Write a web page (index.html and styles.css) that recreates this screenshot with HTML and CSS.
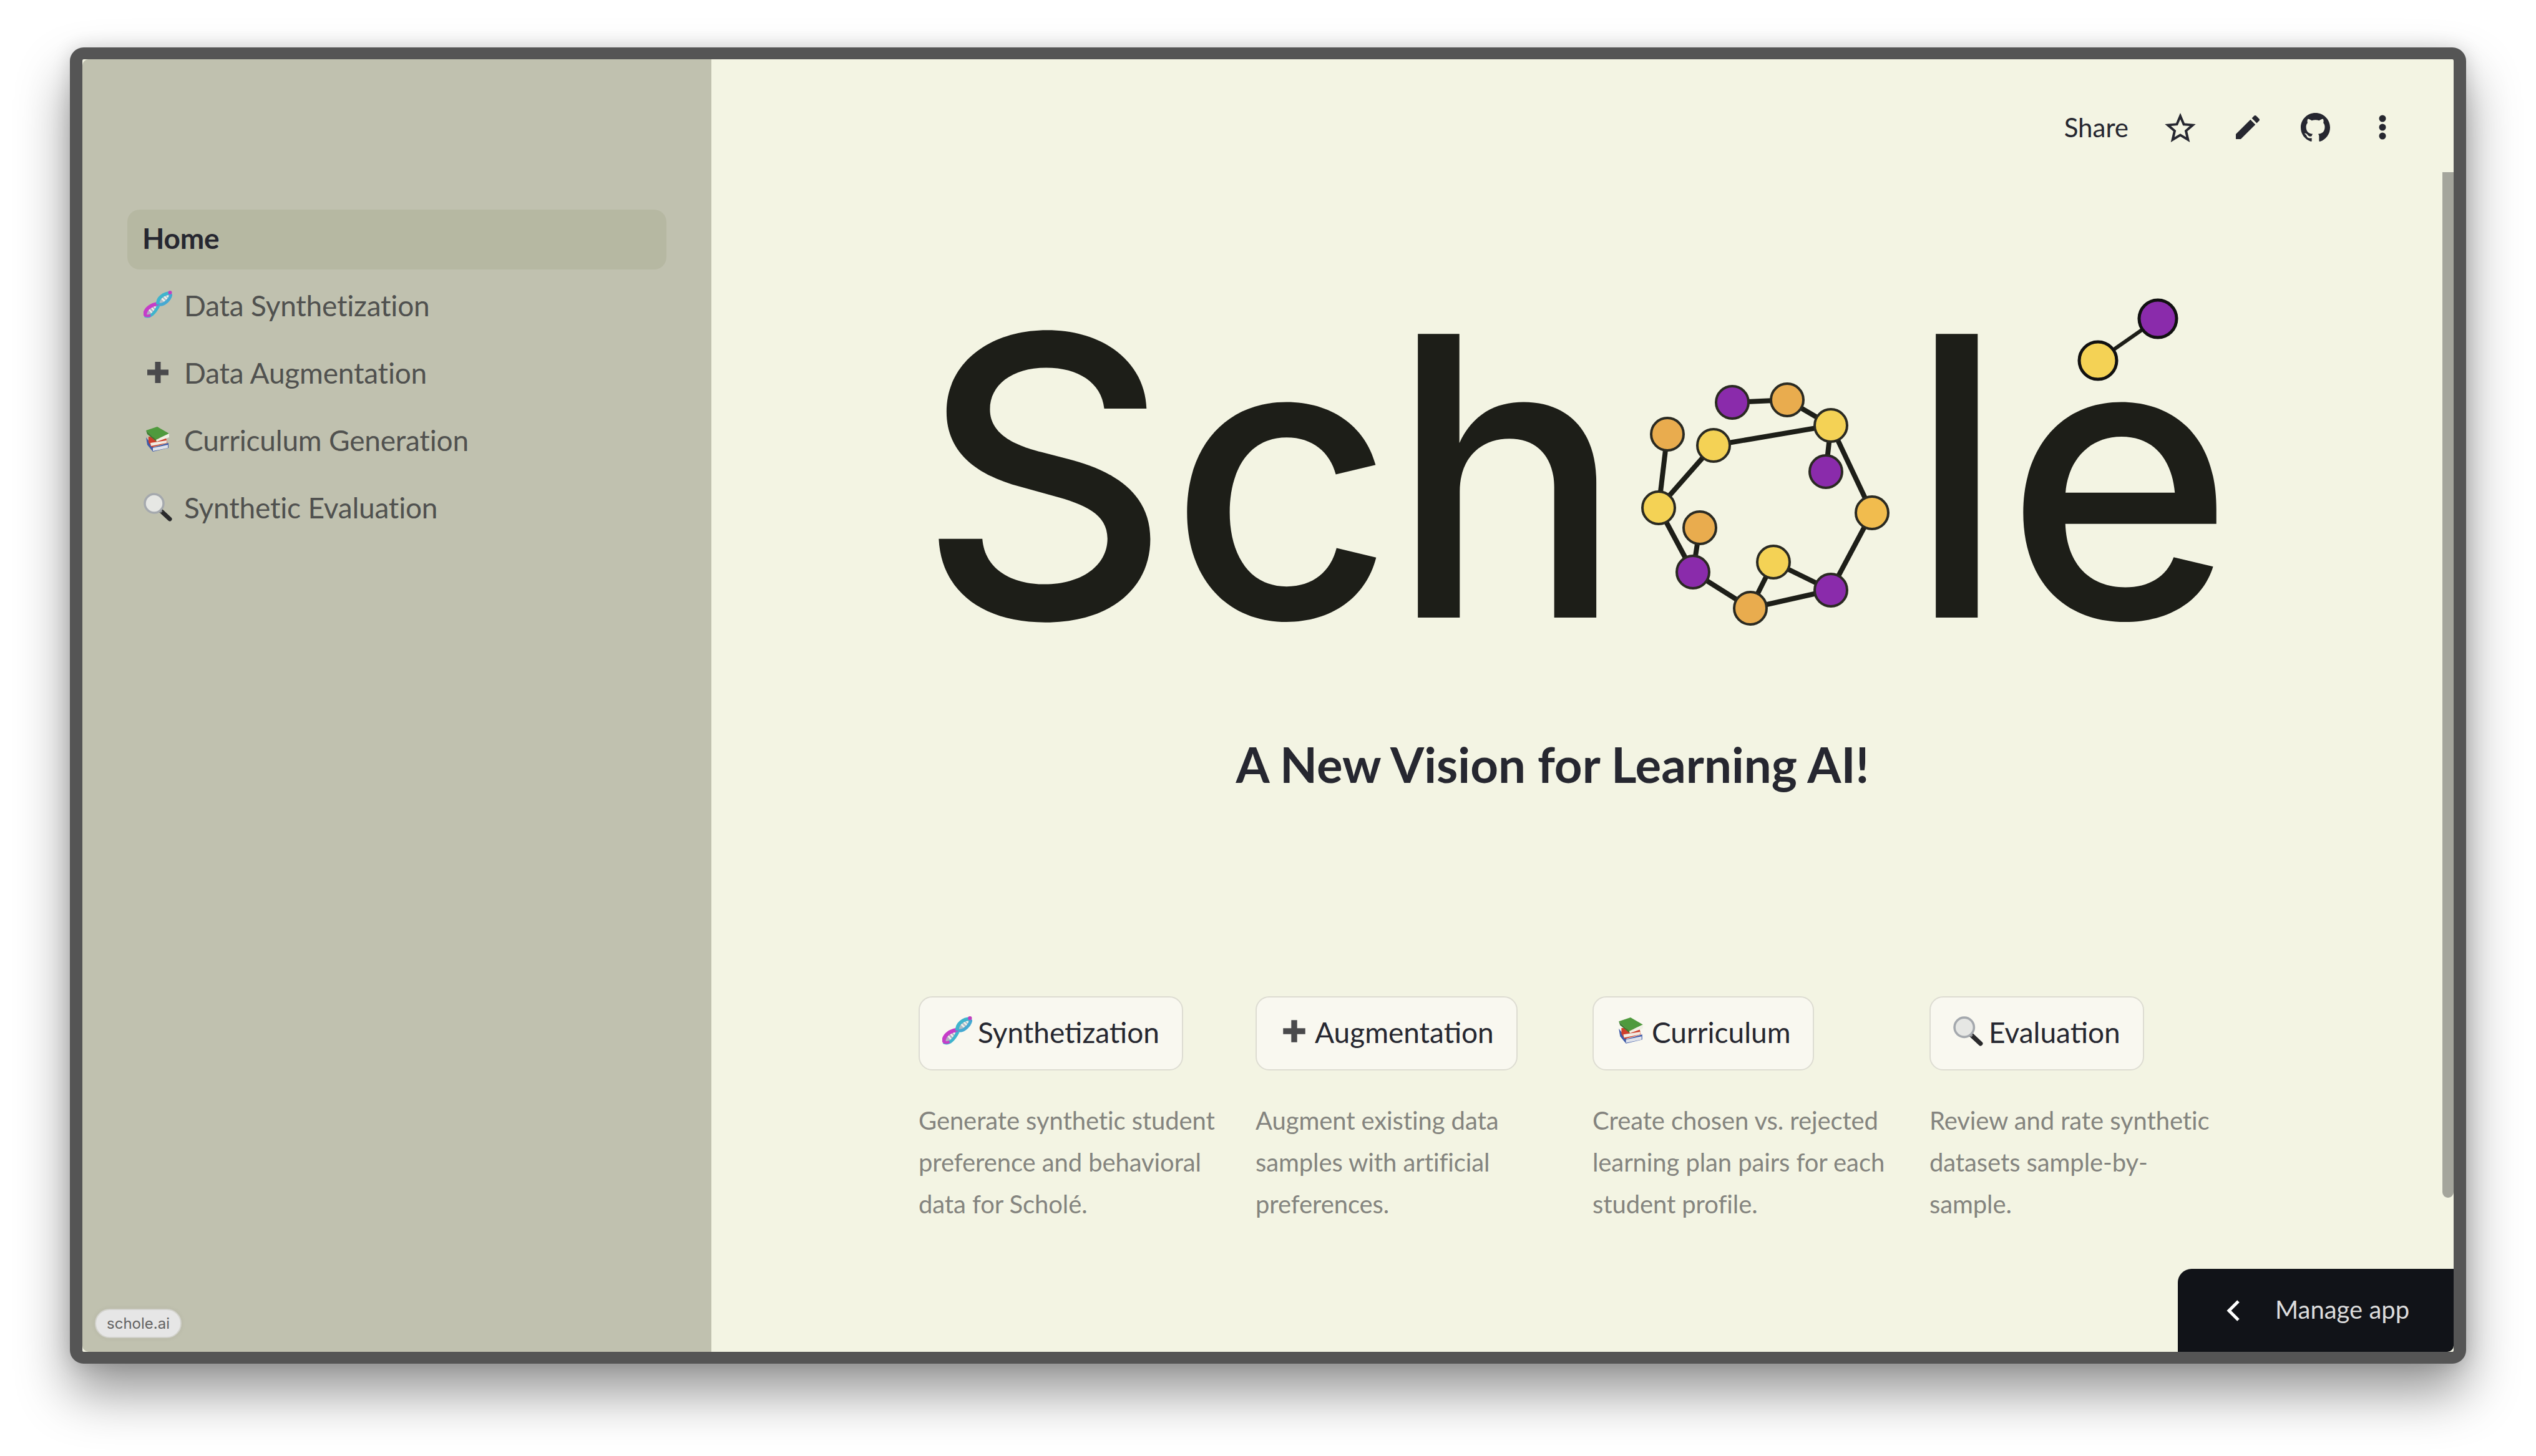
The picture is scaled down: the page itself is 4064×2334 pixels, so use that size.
FILE: index.html
```html
<!DOCTYPE html>
<html lang="en">
<head>
<meta charset="utf-8">
<title>Scholé</title>
<link rel="stylesheet" href="styles.css">
</head>
<body>
<svg class="defs" aria-hidden="true">
  <symbol id="i-dna" viewBox="0 0 46 46">
    <path d="M1 36C3 27 12 22 23 22C22 33 13 42 3 42Z" fill="#b3aec4"/>
    <path d="M23 22C22 11 32 3 44 2C45 12 35 22 23 22Z" fill="#aebcc8"/>
    <path d="M7 28L14 36M11 25L18 33M15 23L21 29M27 10L34 17M31 7L38 14M35 5L41 11" fill="none" stroke="#f0f1ea" stroke-width="2.500"/>
    <path d="M2 40C2 29 12 22 24 21" fill="none" stroke="#c63cc8" stroke-width="6"/>
    <path d="M2 40C10 44 18 36 24 24" fill="none" stroke="#3fb4cd" stroke-width="5"/>
    <path d="M2 39C4 41 8 41 11 39" fill="none" stroke="#c63cc8" stroke-width="4"/>
    <path d="M23 22C22 12 32 4 43 4" fill="none" stroke="#3fb4cd" stroke-width="5.500"/>
    <path d="M24 22C33 24 43 14 44 5" fill="none" stroke="#45a9d2" stroke-width="5"/>
    <circle cx="42.500" cy="3" r="3" fill="#c040c0"/>
  </symbol>
  <symbol id="i-plus" viewBox="0 0 46 46">
    <path d="M18.500 6H27.500V18.500H40V27.500H27.500V40H18.500V27.500H6V18.500H18.500Z" fill="#4a4a4c"/>
  </symbol>
  <symbol id="i-books" viewBox="0 0 46 46">
    <path d="M4 19L16 35L40 28L40 36L15 42L6 31Z" fill="#3e5aa8"/>
    <path d="M15 36L39 31L39 36L15 41Z" fill="#dfe2ea"/>
    <path d="M8 18L36 20L38 28L13 35L8 27Z" fill="#cf3f2c"/>
    <path d="M11 28L37 24L37 28L12 33Z" fill="#f2ece2"/>
    <path d="M4 8L22 2L41 13L20 23Z" fill="#4f9a3d"/>
    <path d="M4 8L20 23L21 26L6 14Z" fill="#3c7c30"/>
    <path d="M20 23L41 13L41 19L21 26Z" fill="#f0f0e4"/>
  </symbol>
  <symbol id="i-glass" viewBox="0 0 46 46">
    <path d="M27 28L42 42" fill="none" stroke="#2a2a2c" stroke-width="7" stroke-linecap="round"/>
    <path d="M24 26L29 31" fill="none" stroke="#8b8d90" stroke-width="4"/>
    <circle cx="17" cy="17" r="15" fill="#e6e7e4" stroke="#a5a9ae" stroke-width="3.500"/>
  </symbol>
</svg>

<div class="window">
  <aside class="sidebar">
    <nav class="nav">
      <a class="nav-item active"><span>Home</span></a>
      <a class="nav-item"><svg class="nav-icon"><use href="#i-dna"/></svg><span>Data Synthetization</span></a>
      <a class="nav-item"><svg class="nav-icon"><use href="#i-plus"/></svg><span>Data Augmentation</span></a>
      <a class="nav-item"><svg class="nav-icon"><use href="#i-books"/></svg><span>Curriculum Generation</span></a>
      <a class="nav-item"><svg class="nav-icon"><use href="#i-glass"/></svg><span>Synthetic Evaluation</span></a>
    </nav>
    <span class="chip">schole.ai</span>
  </aside>

  <main class="main">
    <header class="toolbar">
      <span class="share">Share</span>
      <svg class="tool tool-star" viewBox="2 2 20 19"><path d="M22 9.240l-7.190-.620L12 2 9.190 8.630 2 9.240l5.460 4.730L5.820 21 12 17.270 18.180 21l-1.630-7.030L22 9.240zM12 15.400l-3.760 2.270 1-4.280-3.320-2.880 4.380-.380L12 6.100l1.710 4.040 4.380.380-3.320 2.880 1 4.280L12 15.400z"/></svg>
      <svg class="tool tool-pencil" viewBox="3 3 18 18"><path d="M3 17.250V21h3.750L17.810 9.940l-3.750-3.750L3 17.250zM20.710 7.040c.390-.390.390-1.020 0-1.410l-2.340-2.340c-.390-.390-1.020-.390-1.410 0l-1.830 1.830 3.750 3.750 1.830-1.830z"/></svg>
      <svg class="tool tool-github" viewBox="0 0 16 16"><path d="M8 0C3.580 0 0 3.580 0 8c0 3.540 2.290 6.530 5.470 7.590.400.070.550-.170.550-.380 0-.190-.010-.820-.010-1.490-2.010.370-2.530-.490-2.690-.940-.090-.230-.480-.940-.820-1.130-.280-.150-.680-.520-.010-.530.630-.010 1.080.580 1.230.820.720 1.210 1.870.870 2.330.660.070-.520.280-.870.510-1.070-1.780-.200-3.640-.890-3.640-3.950 0-.870.310-1.590.820-2.150-.080-.200-.360-1.020.080-2.120 0 0 .670-.210 2.200.820.640-.180 1.320-.270 2-.270.680 0 1.360.090 2 .270 1.530-1.040 2.200-.820 2.200-.820.440 1.100.160 1.920.080 2.120.510.560.820 1.270.820 2.150 0 3.070-1.870 3.750-3.650 3.950.290.250.540.730.540 1.480 0 1.070-.010 1.930-.010 2.200 0 .210.150.460.550.380A8.013 8.013 0 0016 8c0-4.420-3.580-8-8-8z"/></svg>
      <svg class="tool tool-dots" viewBox="0 0 12 40"><circle cx="6" cy="6" r="5.500"/><circle cx="6" cy="20" r="5.500"/><circle cx="6" cy="34" r="5.500"/></svg>
    </header>

    <div class="content">
      <svg class="logo" viewBox="1440 340 2160 820" role="img" aria-label="Scholé">
        <g class="logo-type">
          <text x="1472 1873 2227" y="989">Sch</text>
          <text x="3057" y="989">l</text>
          <text x="3213" y="989">e</text>
        </g>
        <g class="edges">
          <path d="M2776 644L2864 640L2934 681"/>
          <path d="M2746 713L2934 681L2926 755"/>
          <path d="M2934 681L3000 821L2934 945L2842 900L2805 974L2934 945"/>
          <path d="M2805 974L2713 916L2724 845"/>
          <path d="M2713 916L2658 813L2746 713"/>
          <path d="M2658 813L2672 695"/>
        </g>
        <path class="edges edges-thin" d="M3362 577L3458 510"/>
        <g class="nodes">
          <circle class="purple" cx="2776" cy="644" r="26"/>
          <circle class="orange" cx="2864" cy="640" r="26"/>
          <circle class="yellow" cx="2934" cy="681" r="26"/>
          <circle class="orange" cx="2672" cy="695" r="26"/>
          <circle class="yellow" cx="2746" cy="713" r="26"/>
          <circle class="purple" cx="2926" cy="755" r="26"/>
          <circle class="yellow" cx="2658" cy="813" r="26"/>
          <circle class="amber" cx="3000" cy="821" r="26"/>
          <circle class="orange" cx="2724" cy="845" r="26"/>
          <circle class="yellow" cx="2842" cy="900" r="26"/>
          <circle class="purple" cx="2713" cy="916" r="26"/>
          <circle class="purple" cx="2934" cy="945" r="26"/>
          <circle class="orange" cx="2805" cy="974" r="26"/>
          <circle class="purple big" cx="3458" cy="510" r="30"/>
          <circle class="yellow big" cx="3362" cy="577" r="30"/>
        </g>
      </svg>

      <h2 class="tagline">A New Vision for Learning AI!</h2>

      <section class="cards">
        <article class="card">
          <button class="btn"><svg class="btn-icon"><use href="#i-dna"/></svg><span>Synthetization</span></button>
          <p class="desc">Generate synthetic student preference and behavioral data for Scholé.</p>
        </article>
        <article class="card">
          <button class="btn"><svg class="btn-icon"><use href="#i-plus"/></svg><span>Augmentation</span></button>
          <p class="desc">Augment existing data samples with artificial preferences.</p>
        </article>
        <article class="card">
          <button class="btn"><svg class="btn-icon"><use href="#i-books"/></svg><span>Curriculum</span></button>
          <p class="desc">Create chosen vs. rejected learning plan pairs for each student profile.</p>
        </article>
        <article class="card">
          <button class="btn"><svg class="btn-icon"><use href="#i-glass"/></svg><span>Evaluation</span></button>
          <p class="desc">Review and rate synthetic datasets sample-by-sample.</p>
        </article>
      </section>
    </div>

    <div class="scrollbar"></div>
    <div class="manage">
      <svg class="chevron" viewBox="0 0 22 34"><path d="M19 2L4 17L19 32"/></svg>
      <span>Manage app</span>
    </div>
  </main>
</div>
</body>
</html>
```
FILE: styles.css
```css
* { box-sizing: border-box; }
html, body { margin: 0; height: 100%; }
body {
  background: #fff;
  font-family: "Lato", "Noto Sans", sans-serif;
  color: #262730;
  padding: 76px 112px 148px;
  overflow: hidden;
}
.defs { display: none; }

.window {
  display: flex;
  width: 3840px;
  height: 2110px;
  background: #f3f4e3;
  border: solid #555;
  border-width: 19px 20px;
  border-radius: 22px;
  box-shadow: 0 46px 84px rgba(0, 0, 0, .42), 0 0 30px rgba(0, 0, 0, .14);
  position: relative;
}

.sidebar {
  width: 1008px;
  flex: none;
  background: #c0c1af;
  border-radius: 10px 0 0 10px;
  padding: 241px 72px 0;
  position: relative;
}
.nav { display: flex; flex-direction: column; gap: 12px; }
.nav-item {
  display: flex;
  align-items: center;
  gap: 19px;
  height: 96px;
  padding: 0 24px 5px;
  border-radius: 20px;
  font-size: 46px;
  letter-spacing: -.2px;
  color: #50514f;
}
.nav-item.active { background: #b6b8a2; color: #262730; font-weight: 700; }
.nav-icon { width: 46px; height: 46px; flex: none; margin-top: -2px; margin-left: 2px; }

.chip {
  position: absolute;
  left: 20px;
  bottom: 22px;
  height: 47px;
  padding: 0 17px;
  display: flex;
  align-items: center;
  background: #e6e6e6;
  border: 2px solid #d2d2cc;
  border-radius: 24px;
  font-family: "Inter", sans-serif;
  font-size: 24px;
  color: #636363;
  box-shadow: 0 0 8px rgba(0, 0, 0, .06);
}

.main { flex: 1; position: relative; overflow: hidden; border-radius: 0 10px 10px 0; }

.toolbar {
  display: flex;
  justify-content: flex-end;
  align-items: center;
  height: 218px;
  margin-bottom: 2px;
  padding-right: 108px;
}
.share { font-size: 42px; margin-right: 58px; }
.tool { fill: #262730; display: block; }
.tool-star { width: 50px; height: 47px; margin-right: 64px; }
.tool-pencil { width: 38px; height: 38px; margin-right: 66px; }
.tool-github { width: 47px; height: 47px; margin-right: 78px; }
.tool-dots { width: 12px; height: 40px; }

.content { padding-left: 332px; }
.logo { display: block; width: 2160px; height: 820px; margin: 28px 0 0 -32px; }
.logo-type { font-family: "Inter", sans-serif; font-size: 625px; font-weight: 500; fill: #1d1e18; }
.edges { fill: none; stroke: #1d1e18; stroke-width: 8; }
.edges-thin { stroke-width: 6; }
.nodes circle { stroke: #2a2a22; stroke-width: 4; }
.purple { fill: #8a2bab; }
.orange { fill: #e9ac4e; }
.yellow { fill: #f4d255; }
.amber { fill: #f1bc4e; }
.nodes .big { stroke: #111; stroke-width: 5; }

.tagline {
  width: 2032px;
  margin: 14px 0 0;
  text-align: center;
  font-size: 78px;
  line-height: 100px;
  font-weight: 700;
}

.cards {
  display: grid;
  grid-template-columns: repeat(4, 478px);
  gap: 62px;
  margin-top: 322px;
}
.btn {
  display: inline-flex;
  align-items: center;
  gap: 9px;
  height: 119px;
  padding: 0 36px 4px;
  background: #f9f8f0;
  border: 2px solid #dddcd2;
  border-radius: 22px;
  font: inherit;
  font-size: 46px;
  color: #262730;
}
.btn-icon { width: 48px; height: 48px; flex: none; margin-top: -3px; }
.desc {
  margin: 47px 0 0;
  font-size: 40px;
  line-height: 67px;
  letter-spacing: -.1px;
  color: #84847f;
}

.scrollbar {
  position: absolute;
  top: 181px;
  right: 0;
  width: 18px;
  height: 1644px;
  background: #a4a59c;
  border-radius: 0 0 9px 9px;
}

.manage {
  position: absolute;
  right: 0;
  bottom: 0;
  width: 442px;
  height: 133px;
  background: #111318;
  border-radius: 22px 0 0 0;
  color: #dcdcdc;
  font-size: 40px;
  display: flex;
  align-items: center;
  gap: 56px;
  padding: 0 0 4px 78px;
}
.chevron { width: 22px; height: 34px; fill: none; stroke: #fff; stroke-width: 5; margin-top: 4px; }
```
